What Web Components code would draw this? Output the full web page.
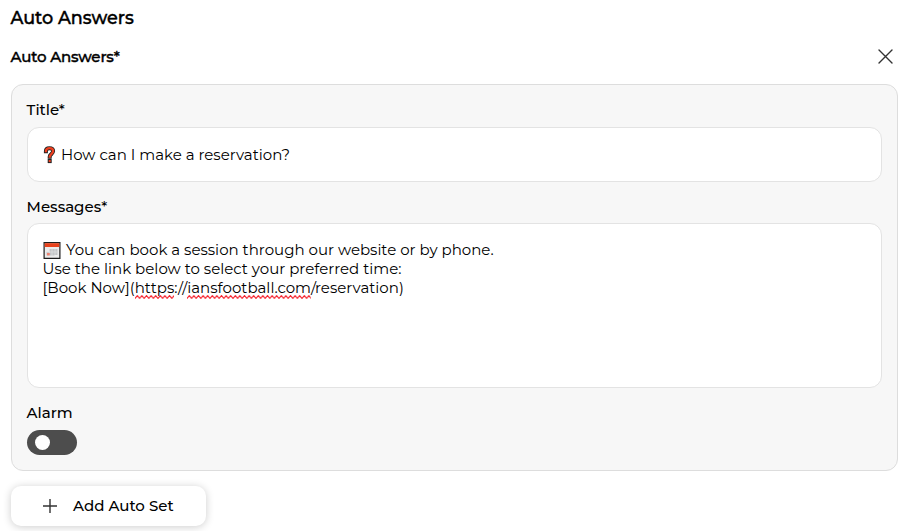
<!DOCTYPE html>
<html lang="en">
<head>
<meta charset="utf-8">
<title>Auto Answers</title>
<style>
    body {
        margin: 0;
        background: #fff;
        color: #000;
        font-family: Montserrat, Inter, sans-serif;
        font-size: 15px;
    }
</style>
</head>
<body>
<auto-answers></auto-answers>

<script>
class EmojiIcon extends HTMLElement {
    constructor() {
        super();
        this.root = this.attachShadow({ mode: 'open' });
    }

    connectedCallback() {
        const icons = {
            question: `
                <svg width="14" height="18" viewBox="-0.5 0 14 18" fill="none" stroke-linecap="square">
                    <path d="M2.4 5.2C2.4 3 4 2.2 5.9 2.2c2.1 0 3.7 1 3.7 2.9 0 3-3.4 3-3.4 5.6" stroke="#222" stroke-width="4"/>
                    <path d="M6.2 15v.1" stroke="#222" stroke-width="4"/>
                    <path d="M2.4 5.2C2.4 3 4 2.2 5.9 2.2c2.1 0 3.7 1 3.7 2.9 0 3-3.4 3-3.4 5.6" stroke="#ee4020" stroke-width="2.3"/>
                    <path d="M6.2 15v.1" stroke="#ee4020" stroke-width="2"/>
                </svg>`,
            calendar: `
                <svg width="19.5" height="17" viewBox="-1.5 0 19.5 17">
                    <path d="M.6.6h15.8v15.8H.6z" fill="#ececec" stroke="#1c1c1c" stroke-width="1.2"/>
                    <path d="M1.2 1.2h14.6V5H1.2z" fill="#e8411b"/>
                    <path d="M6 7h8v6H6zM3 10h8v3.5H3z" fill="#c3c5c7"/>
                    <path d="M8.5 7v7M11.5 7v6M3 10h11M6 9v5" stroke="#dfe1e2" stroke-width=".7"/>
                    <path d="M3.5 11h2.8v2.4H3.5z" fill="#ee8270"/>
                </svg>`
        };
        this.root.innerHTML = `
        <style>
            :host { display: inline-block; height: 17px; line-height: 0; vertical-align: -4px; }
            svg { margin: 0 0.5px 0 -0.5px; }
        </style>
        ${icons[this.getAttribute('name')]}
        `;
    }
}

// a word with a red zigzag below it
class SpellMark extends HTMLElement {
    constructor() {
        super();
        this.root = this.attachShadow({ mode: 'open' });
        this.root.innerHTML = `
        <style>
            :host { display: inline-block; position: relative; }
            svg { position: absolute; left: 0; bottom: -2px; width: 100%; height: 4px; }
        </style>
        <slot></slot>
        <svg>
            <defs>
                <pattern id="zigzag" width="4.6" height="4" patternUnits="userSpaceOnUse">
                    <path d="M-2.3 .6L0 3.4 2.3 .6 4.6 3.4 6.9 .6" fill="none" stroke="#f5222d" stroke-width="1.1"/>
                </pattern>
            </defs>
            <rect width="100%" height="4" fill="url(#zigzag)"/>
        </svg>
        `;
    }
}

class FormField extends HTMLElement {
    constructor() {
        super();
        this.root = this.attachShadow({ mode: 'open' });
        this.root.innerHTML = `
        <style>
            :host { display: block; }
            .label {
                height: 20px;
                line-height: 20px;
                margin-bottom: var(--label-gap, 7px);
                margin-left: -0.4px;
                font-weight: 500;
            }
        </style>
        <div class="label"><slot name="label"></slot></div>
        <slot></slot>
        `;
    }
}

class TextBox extends HTMLElement {
    constructor() {
        super();
        this.root = this.attachShadow({ mode: 'open' });
        this.root.innerHTML = `
        <style>
            :host {
                display: block;
                box-sizing: border-box;
                height: 55px;
                padding: 17px 15px;
                background: #fff;
                border: 1px solid #e3e3e3;
                border-radius: 12px;
                line-height: 19px;
                white-space: nowrap;
            }
            :host([multiline]) { height: 165px; padding: 16px 14.6px; }
        </style>
        <slot></slot>
        `;
    }
}

class ToggleSwitch extends HTMLElement {
    constructor() {
        super();
        this.root = this.attachShadow({ mode: 'open' });
        this.root.innerHTML = `
        <style>
            :host {
                display: flex;
                align-items: center;
                box-sizing: border-box;
                width: 50px;
                height: 25px;
                padding: 0 8px;
                border-radius: 13px;
                background: #4d4d4d;
                cursor: pointer;
            }
            :host([checked]) { justify-content: flex-end; }
            .knob { width: 15px; height: 15px; border-radius: 50%; background: #fff; }
        </style>
        <div class="knob"></div>
        `;
        this.addEventListener('click', () => this.toggleAttribute('checked'));
    }
}

class AddButton extends HTMLElement {
    constructor() {
        super();
        this.root = this.attachShadow({ mode: 'open' });
        this.root.innerHTML = `
        <style>
            :host { display: block; }
            button {
                display: flex;
                align-items: center;
                gap: 16px;
                width: 195px;
                height: 40px;
                padding: 0 0 0 32px;
                border: none;
                border-radius: 10px;
                background: #fff;
                box-shadow: 0 1px 8px rgba(0, 0, 0, 0.2);
                color: #000;
                font: inherit;
                font-weight: 500;
                line-height: 18px;
                white-space: nowrap;
                cursor: pointer;
            }
            span { margin-top: -1px; }
        </style>
        <button>
            <svg width="14" height="14" viewBox="0 0 14 14"><path d="M7 0v14M0 7h14" stroke="#333" stroke-width="1.4"/></svg>
            <span><slot></slot></span>
        </button>
        `;
    }
}

class AutoAnswers extends HTMLElement {
    constructor() {
        super();
        this.root = this.attachShadow({ mode: 'open' });
        this.root.innerHTML = `
        <style>
            :host {
                display: block;
                box-sizing: border-box;
                height: 531px;
                padding: 6px 13px 0 11px;
                overflow: hidden;
            }
            h1, h2 {
                margin: 0 0 0 -0.5px;
                font-weight: 500;
                white-space: nowrap;
                -webkit-text-stroke: 0.4px #000;
            }
            h1 { height: 24px; line-height: 24px; font-size: 17.6px; }
            h2 { font-size: 15px; line-height: 20px; letter-spacing: -0.16px; }
            header {
                display: flex;
                justify-content: space-between;
                align-items: center;
                height: 20px;
                margin: 17px 5px 17px 0;
            }
            header svg { margin-top: -2px; }
            .card {
                box-sizing: border-box;
                height: 387px;
                padding: 15px;
                background: #f7f7f7;
                border: 1px solid #ddd;
                border-radius: 12px;
            }
            form-field + form-field { margin-top: 15px; }
            .messages { --label-gap: 6px; }
            add-button { margin-top: 15px; }
        </style>
        <h1>Auto Answers</h1>
        <header>
            <h2>Auto Answers*</h2>
            <svg width="15" height="15" viewBox="0 0 15 15"><path d="M1 1l13 13M14 1L1 14" stroke="#333" stroke-width="1.4" stroke-linecap="round"/></svg>
        </header>
        <div class="card">
            <form-field>
                <span slot="label">Title*</span>
                <text-box><emoji-icon name="question"></emoji-icon> How can I make a reservation?</text-box>
            </form-field>
            <form-field class="messages">
                <span slot="label">Messages*</span>
                <text-box multiline>
                    <div><emoji-icon name="calendar"></emoji-icon> You can book a session through our website or by phone.</div>
                    <div>Use the link below to select your preferred time:</div>
                    <div>[Book Now](<spell-mark>https</spell-mark>://<spell-mark>iansfootball.com</spell-mark>/reservation)</div>
                </text-box>
            </form-field>
            <form-field>
                <span slot="label">Alarm</span>
                <toggle-switch></toggle-switch>
            </form-field>
        </div>
        <add-button>Add Auto Set</add-button>
        `;
    }
}

customElements.define('emoji-icon', EmojiIcon);
customElements.define('spell-mark', SpellMark);
customElements.define('form-field', FormField);
customElements.define('text-box', TextBox);
customElements.define('toggle-switch', ToggleSwitch);
customElements.define('add-button', AddButton);
customElements.define('auto-answers', AutoAnswers);
</script>
</body>
</html>
